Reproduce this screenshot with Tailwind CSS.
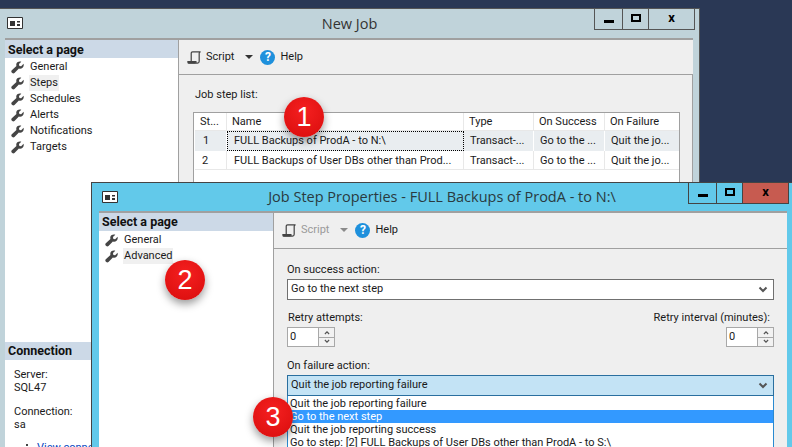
<!DOCTYPE html>
<html lang="en">
<head>
<meta charset="UTF-8">
<script src="https://cdn.jsdelivr.net/npm/@tailwindcss/browser@4"></script>
<title>New Job</title>
</head>
<body class="bg-[#2a3855]">
<svg width="0" height="0" class="absolute">
  <defs>
    <symbol id="wrench" viewBox="0 0 16 16"><path fill="#454545" d="M15.500 3.400c.5 1.800 0 3.700-1.300 4.900-1.300 1.200-3 1.400-4.500.9L4.300 14.800c-.8.8-2 .8-2.700.1l-.7-.7c-.7-.8-.7-2 .1-2.700l5.700-5.400c-.5-1.600-.2-3.400 1.100-4.600C9 .8 11 .4 12.700.9L9.800 3.800l.5 2.200 2.200.5z"/></symbol>
    <symbol id="scroll" viewBox="0 0 16 16"><path fill="none" stroke="currentColor" stroke-width="1.300" d="M4.500 13V3.500C4.500 2.500 5 2 6 2h8.500c-.8 0-1.500.6-1.500 1.500V12c0 1.200-.7 2-1.800 2H2c-.6 0-1-.4-1-1v-.5h8.500v.5c0 .6.500 1 1 1"/><path fill="currentColor" d="M1 12.500h8v2H2.500C1.500 14.500 1 13.800 1 12.500z"/></symbol>
    <symbol id="winicon" viewBox="0 0 16 16"><path fill="#fff" stroke="#333" d="M.5 2.500h15v11H.5z"/><path fill="#333" d="M3 6h5v5H3zM10 6h3v1.500h-3zM10 9h3v2h-3z"/></symbol>
    <symbol id="chev" viewBox="0 0 10 8"><path fill="none" stroke="#555" stroke-width="2" d="M1.500 1.500 5 5l3.500-3.500"/></symbol>
    <symbol id="people" viewBox="0 0 14 8"><path fill="#444" d="M1 3h2v2H1zM6 0h2v2H6zM11 3h2v2h-2zM0 6h4v2H0zM5 3h4v5H5zM10 6h4v2h-4z"/></symbol>
  </defs>
</svg>

<div class="relative w-[792px] h-[447px] overflow-hidden font-['Roboto',sans-serif] text-[11px] text-[#1a1a1a]">

  <!-- New Job window -->
  <div class="absolute left-0 top-2 w-[700px] h-[439px] bg-[#c0d3da] border-t border-r border-[#555] flex flex-col">
    <div class="relative h-[29px] shrink-0 flex items-center justify-center">
      <svg class="absolute left-[7px] top-[6px] w-[16px] h-[16px]"><use href="#winicon"/></svg>
      <span class="text-[14.500px] text-[#333] font-['Open_Sans',sans-serif]">New Job</span>
      <div class="absolute left-[594px] top-0 w-[101px] h-[21px] flex border-x border-b border-[#555]">
        <div class="w-[28px] border-r border-[#555] flex items-end justify-center pb-[6px]"><div class="w-[10px] h-[3px] bg-black"></div></div>
        <div class="w-[26px] border-r border-[#555] flex items-center justify-center pb-[3px]"><div class="w-[10px] h-[8px] border-2 border-black"></div></div>
        <div class="flex-1 flex items-center justify-center pb-[3px] text-[13px] font-bold text-black">x</div>
      </div>
    </div>
    <div class="flex flex-1 ml-[5px] mr-[6px] border-t-2 border-[#a0a0a0] min-h-0">
      <div class="w-[174px] shrink-0 bg-white flex flex-col border-r border-[#a0a0a0]">
        <div class="h-[18px] bg-[#ccd9e7] pl-[3px] font-bold text-[12.500px] leading-[19px] text-[#111]">Select a page</div>
        <div class="flex flex-col pt-[1px]">
          <div class="h-[16px] flex items-center gap-[6px] pl-[6px]"><svg class="w-[13px] h-[13px]"><use href="#wrench"/></svg><span>General</span></div>
          <div class="h-[16px] flex items-center gap-[6px] pl-[6px]"><svg class="w-[13px] h-[13px]"><use href="#wrench"/></svg><span class="px-[1px] -mx-[1px] bg-[#f0f0f0] leading-[16px]">Steps</span></div>
          <div class="h-[16px] flex items-center gap-[6px] pl-[6px]"><svg class="w-[13px] h-[13px]"><use href="#wrench"/></svg><span>Schedules</span></div>
          <div class="h-[16px] flex items-center gap-[6px] pl-[6px]"><svg class="w-[13px] h-[13px]"><use href="#wrench"/></svg><span>Alerts</span></div>
          <div class="h-[16px] flex items-center gap-[6px] pl-[6px]"><svg class="w-[13px] h-[13px]"><use href="#wrench"/></svg><span>Notifications</span></div>
          <div class="h-[16px] flex items-center gap-[6px] pl-[6px]"><svg class="w-[13px] h-[13px]"><use href="#wrench"/></svg><span>Targets</span></div>
        </div>
        <div class="mt-[187px] h-[18px] bg-[#ccd9e7] pl-[3px] font-bold text-[12.500px] leading-[18px] text-[#111]">Connection</div>
        <div class="pl-[9px] pt-[8px] leading-[13px]">
          <div>Server:</div>
          <div>SQL47</div>
          <div class="mt-[11px]">Connection:</div>
          <div>sa</div>
          <div class="mt-[10px] pl-[6px] flex items-center gap-[3px] text-[#0645c0] whitespace-nowrap"><svg class="w-[14px] h-[8px]"><use href="#people"/></svg><span>View connection properties</span></div>
        </div>
      </div>
      <div class="flex-1 bg-[#efefef] flex flex-col min-w-0">
        <div class="h-[35px] shrink-0 border-b border-[#a0a0a0] flex items-center pl-[8px]">
          <svg class="w-[15px] h-[15px] text-[#444]"><use href="#scroll"/></svg>
          <span class="ml-[4px]">Script</span>
          <span class="ml-[11px] w-0 h-0 border-x-[4px] border-x-transparent border-t-[4px] border-t-[#333]"></span>
          <span class="ml-[7px] w-[15px] h-[15px] rounded-full bg-[#1e90dc] text-white font-bold text-[12px] leading-[15px] text-center">?</span>
          <span class="ml-[5px]">Help</span>
        </div>
        <div class="pl-[16px] pt-[13px] flex-1 border-r border-[#a0a0a0]">
          <div class="leading-[13px]">Job step list:</div>
          <div class="mt-[11px] ml-[-2px] w-[487px] h-[120px] bg-white border border-[#a0a0a0] pl-[1px]">
            <div class="grid grid-cols-[32px_237px_70px_71px_74px] h-[18px] leading-[18px] border-b border-[#e8e8e8] whitespace-nowrap">
              <div class="pl-[5px] border-r border-[#e8e8e8]">St...</div>
              <div class="pl-[5px] border-r border-[#e8e8e8]">Name</div>
              <div class="pl-[5px] border-r border-[#e8e8e8]">Type</div>
              <div class="pl-[5px] border-r border-[#e8e8e8]">On Success</div>
              <div class="pl-[5px]">On Failure</div>
            </div>
            <div class="grid grid-cols-[32px_237px_70px_71px_74px] h-[20px] leading-[19px] bg-[#e9edf0] whitespace-nowrap">
              <div class="pl-[8px] border-r border-white">1</div>
              <div class="pl-[6px] border border-dotted border-black leading-[17px]">FULL Backups of ProdA - to N:\</div>
              <div class="pl-[6px] border-r border-white">Transact-...</div>
              <div class="pl-[6px] border-r border-white">Go to the ...</div>
              <div class="pl-[6px]">Quit the jo...</div>
            </div>
            <div class="grid grid-cols-[32px_237px_70px_71px_74px] h-[19px] leading-[19px] border-b border-[#e8e8e8] whitespace-nowrap">
              <div class="pl-[7px] border-r border-[#e8e8e8]">2</div>
              <div class="pl-[7px] border-r border-[#e8e8e8]">FULL Backups of User DBs other than Prod...</div>
              <div class="pl-[6px] border-r border-[#e8e8e8]">Transact-...</div>
              <div class="pl-[6px] border-r border-[#e8e8e8]">Go to the ...</div>
              <div class="pl-[6px]">Quit the jo...</div>
            </div>
          </div>
        </div>
      </div>
    </div>
  </div>

  <!-- Job Step Properties window -->
  <div class="absolute left-[91px] top-[182px] w-[701px] h-[265px] bg-[#62c9ea] border-t border-l border-[#444] flex flex-col">
    <div class="relative h-[28px] shrink-0 flex items-center justify-center">
      <svg class="absolute left-[10px] top-[6px] w-[16px] h-[16px]"><use href="#winicon"/></svg>
      <span class="text-[14.500px] text-[#2a3a40] font-['Open_Sans',sans-serif]">Job Step Properties - FULL Backups of ProdA - to N:\</span>
      <div class="absolute left-[596px] top-0 w-[101px] h-[21px] flex border-x border-b border-[#444]">
        <div class="w-[28px] border-r border-[#444] flex items-end justify-center pb-[6px]"><div class="w-[10px] h-[3px] bg-black"></div></div>
        <div class="w-[26px] border-r border-[#444] flex items-center justify-center pb-[3px]"><div class="w-[10px] h-[8px] border-2 border-black"></div></div>
        <div class="flex-1 bg-[#c75b50] flex items-center justify-center pb-[3px] text-[13px] font-bold text-black">x</div>
      </div>
    </div>
    <div class="flex flex-1 ml-[7px] mr-[5px] border-t-2 border-[#a0a0a0] min-h-0">
      <div class="w-[175px] shrink-0 bg-white flex flex-col border-r border-[#a0a0a0]">
        <div class="h-[18px] bg-[#ccd9e7] pl-[3px] font-bold text-[12.500px] leading-[18px] text-[#111]">Select a page</div>
        <div class="flex flex-col pt-[1px]">
          <div class="h-[16px] flex items-center gap-[6px] pl-[6px]"><svg class="w-[13px] h-[13px]"><use href="#wrench"/></svg><span>General</span></div>
          <div class="h-[16px] flex items-center gap-[6px] pl-[6px]"><svg class="w-[13px] h-[13px]"><use href="#wrench"/></svg><span class="px-[1px] -mx-[1px] bg-[#f0f0f0] leading-[16px]">Advanced</span></div>
        </div>
      </div>
      <div class="flex-1 bg-[#efefef] flex flex-col min-w-0">
        <div class="h-[36px] shrink-0 border-b border-[#a0a0a0] flex items-center pl-[8px] pb-[1px]">
          <svg class="w-[15px] h-[15px] text-[#444]"><use href="#scroll"/></svg>
          <span class="ml-[4px] text-[#9a9a9a]">Script</span>
          <span class="ml-[11px] w-0 h-0 border-x-[4px] border-x-transparent border-t-[4px] border-t-[#8a8a8a]"></span>
          <span class="ml-[7px] w-[15px] h-[15px] rounded-full bg-[#1e90dc] text-white font-bold text-[12px] leading-[15px] text-center">?</span>
          <span class="ml-[5px]">Help</span>
        </div>
        <div class="pl-[13px] pr-[13px] pt-[14px] flex flex-col">
          <div class="leading-[13px]">On success action:</div>
          <div class="mt-[3px] h-[21px] bg-white border border-[#707070] flex items-center justify-between pl-[3px] pr-[5px]">
            <span>Go to the next step</span><svg class="w-[10px] h-[8px]"><use href="#chev"/></svg>
          </div>
          <div class="mt-[11px] flex justify-between">
            <div class="flex flex-col items-start">
              <div class="leading-[13px] pl-[1px]">Retry attempts:</div>
              <div class="mt-[3px] w-[48px] h-[20px] flex bg-white border border-[#a8a8a8]">
                <span class="flex-1 leading-[18px] pl-[2px]">0</span>
                <div class="w-[16px] flex flex-col gap-[1px] bg-[#a8a8a8] border-l border-[#a8a8a8]">
                  <div class="flex-1 bg-[#f2f2f2] flex items-center justify-center"><svg class="w-[6px] h-[5px] rotate-180"><use href="#chev"/></svg></div>
                  <div class="flex-1 bg-[#f2f2f2] flex items-center justify-center"><svg class="w-[6px] h-[5px]"><use href="#chev"/></svg></div>
                </div>
              </div>
            </div>
            <div class="flex flex-col items-end">
              <div class="leading-[13px] pr-[4px]">Retry interval (minutes):</div>
              <div class="mt-[3px] w-[48px] h-[20px] flex bg-white border border-[#a8a8a8]">
                <span class="flex-1 leading-[18px] pl-[2px]">0</span>
                <div class="w-[16px] flex flex-col gap-[1px] bg-[#a8a8a8] border-l border-[#a8a8a8]">
                  <div class="flex-1 bg-[#f2f2f2] flex items-center justify-center"><svg class="w-[6px] h-[5px] rotate-180"><use href="#chev"/></svg></div>
                  <div class="flex-1 bg-[#f2f2f2] flex items-center justify-center"><svg class="w-[6px] h-[5px]"><use href="#chev"/></svg></div>
                </div>
              </div>
            </div>
          </div>
          <div class="mt-[12px] leading-[13px]">On failure action:</div>
          <div class="mt-[3px] h-[21px] bg-[#c3e3f5] border border-[#2a6f9f] flex items-center justify-between pl-[3px] pr-[5px]">
            <span>Quit the job reporting failure</span><svg class="w-[10px] h-[8px]"><use href="#chev"/></svg>
          </div>
          <div class="bg-white border-x border-[#2a8ad0] pt-[1px] leading-[13px]">
            <div class="h-[13px] pl-[2px]">Quit the job reporting failure</div>
            <div class="h-[13px] pl-[2px] bg-[#3399ff] text-white">Go to the next step</div>
            <div class="h-[13px] pl-[2px]">Quit the job reporting success</div>
            <div class="h-[13px] pl-[2px]">Go to step: [2] FULL Backups of User DBs other than ProdA - to S:\</div>
          </div>
        </div>
      </div>
    </div>
  </div>

  <!-- callout badges -->
  <div class="absolute left-[284px] top-[97px] w-[40px] h-[40px] rounded-full bg-[radial-gradient(circle_at_50%_35%,#f52020,#d80c0c)] shadow-[0_4px_8px_rgba(0,0,0,0.4)] text-white text-[27px] leading-[40px] text-center font-['Liberation_Sans',sans-serif]">1</div>
  <div class="absolute left-[165px] top-[260px] w-[40px] h-[40px] rounded-full bg-[radial-gradient(circle_at_50%_35%,#f52020,#d80c0c)] shadow-[0_4px_8px_rgba(0,0,0,0.4)] text-white text-[27px] leading-[40px] text-center font-['Liberation_Sans',sans-serif]">2</div>
  <div class="absolute left-[253px] top-[397px] w-[40px] h-[40px] rounded-full bg-[radial-gradient(circle_at_50%_35%,#f52020,#d80c0c)] shadow-[0_4px_8px_rgba(0,0,0,0.4)] text-white text-[27px] leading-[40px] text-center font-['Liberation_Sans',sans-serif]">3</div>
</div>
</body>
</html>
